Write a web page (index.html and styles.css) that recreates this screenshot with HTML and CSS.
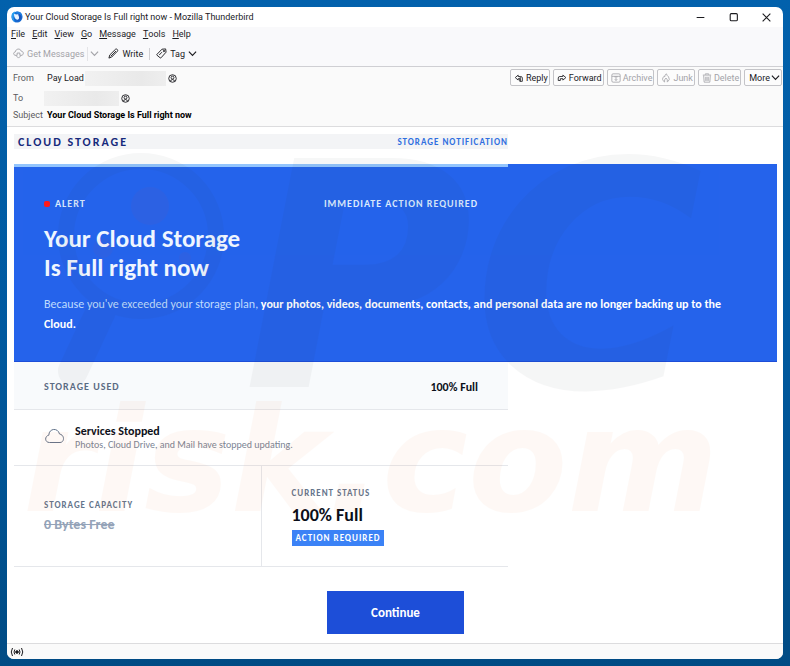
FILE: index.html
```html
<!DOCTYPE html>
<html lang="en">
<head>
<meta charset="utf-8">
<meta name="viewport" content="width=device-width, initial-scale=1">
<title>Your Cloud Storage Is Full right now - Mozilla Thunderbird</title>
<link rel="stylesheet" href="styles.css">
</head>
<body>
<div class="window">
  <header class="titlebar">
    <svg class="logo" viewBox="0 0 24 24" aria-hidden="true"><circle cx="12" cy="12" r="11" fill="#1668d0"/><path d="M2 5C0 12 2 20 9 23C4 17 4 9 9 4L7 1Z" fill="#2a9df0"/><path d="M6 6L12 7C18 5 20 10 18 14C15 19 10 18 8 14C6 11 6 8 6 6Z" fill="#e8f4ff"/><path d="M14 7L18 5L21 9C22 15 17 20 12 20C17 17 17 12 14 7Z" fill="#1c55ba"/><path d="M12 1C19 0 24 6 22 14C21 8 18 5 12 5L8 3Z" fill="#1f7fe0"/></svg>
    <span class="title">Your Cloud Storage Is Full right now - Mozilla Thunderbird</span>
    <div class="controls">
      <button aria-label="Minimize"><svg viewBox="0 0 10 10"><path d="M1.500 5H8.500"/></svg></button>
      <button aria-label="Maximize"><svg viewBox="0 0 10 10"><rect x="2" y="1.500" width="6.500" height="6.500" rx="1"/></svg></button>
      <button aria-label="Close"><svg viewBox="0 0 10 10"><path d="M1.500 1.500L8.500 8.500M8.500 1.500L1.500 8.500"/></svg></button>
    </div>
  </header>
  <div class="chrome">
    <nav class="menu">
      <button><u>F</u>ile</button><button><u>E</u>dit</button><button><u>V</u>iew</button><button><u>G</u>o</button><button><u>M</u>essage</button><button><u>T</u>ools</button><button><u>H</u>elp</button>
    </nav>
    <div class="toolbar">
      <button class="off"><svg class="ic" viewBox="0 0 12 12"><path d="M3 8C0 8 0 4.500 2.500 4.300C3 0.500 8 0 9 3.500C12 3.500 12 8 9 8M4.500 5.500H7.500V8H9L6 11L3 8H4.500Z"/></svg>Get Messages</button>
      <button class="drop off" aria-label="Get messages options"><svg class="chev" viewBox="0 0 8 8"><path d="M0.800 2.300L4 5.700L7.200 2.300"/></svg></button>
      <button class="write"><svg class="ic" viewBox="0 0 12 12"><path d="M1 11L2 7.500L8.300 1.300Q9.300 0.700 10.200 1.700Q11 2.700 10.300 3.500L4 9.900Z"/><path d="M3 9L8.700 3.300"/></svg>Write</button>
      <button class="tag"><svg class="ic" viewBox="0 0 12 12"><path d="M1 7L6.500 1.300L10.500 1L11 4.500L5.500 10.700Q5 11 4.500 10.700L1 7.800Q0.700 7.400 1 7ZM3.500 7.700L6.500 4.500"/><circle cx="8.700" cy="3.300" r=".8"/></svg>Tag<svg class="chev" viewBox="0 0 8 8"><path d="M0.800 2.300L4 5.700L7.200 2.300"/></svg></button>
    </div>
  </div>
  <section class="headers">
    <dl class="fields">
      <dt>From</dt><dd>Pay Load<span class="redact"></span><svg class="person" viewBox="0 0 10 10"><circle cx="5" cy="5" r="4.200"/><path d="M3 8V7Q5 5.300 7 7V8"/><circle cx="5" cy="4" r="1.600"/></svg></dd>
      <dt>To</dt><dd class="to"><span class="redact short"></span><svg class="person" viewBox="0 0 10 10"><circle cx="5" cy="5" r="4.200"/><path d="M3 8V7Q5 5.300 7 7V8"/><circle cx="5" cy="4" r="1.600"/></svg></dd>
      <dt>Subject</dt><dd class="subject">Your Cloud Storage Is Full right now</dd>
    </dl>
    <div class="actions">
      <button><svg class="ic" viewBox="0 0 12 12"><path d="M5 2.500L1.500 5.500L5 8.500V6.800H7V10H10V6Q10 4.200 8 4.200H5ZM7.500 4.500V10"/></svg>Reply</button>
      <button><svg class="ic" viewBox="0 0 12 12"><path d="M7 2.500L10.700 5.500L7 8.500V6.800H4V9H1.500V6Q1.500 4.200 3.500 4.200H7Z"/></svg>Forward</button>
      <button class="off"><svg class="ic" viewBox="0 0 12 12"><rect x="1" y="1" width="10" height="10" rx="1.500"/><path d="M1 4H11M4 4.500H8M6 5V9M4.500 7.500L6 9L7.500 7.500"/></svg>Archive</button>
      <button class="off"><svg class="ic" viewBox="0 0 12 12"><path d="M6.500 1Q7 3 9 4.500Q11.500 8 8 10.500M6.500 1Q4 2.500 4.500 4.500L3.500 4Q0 8 4 10.500M4.300 11Q3.500 8 6 6Q8.500 8 7.500 11"/></svg>Junk</button>
      <button class="off"><svg class="ic" viewBox="0 0 12 12"><path d="M1 2.500H11M4 2V1H8V2M2 3L2.600 11H9.400L10 3M4.500 4.500V9.500M6 4.500V9.500M7.500 4.500V9.500"/></svg>Delete</button>
      <button class="more">More<svg class="chev" viewBox="0 0 8 8"><path d="M0.800 2.300L4 5.700L7.200 2.300"/></svg></button>
    </div>
  </section>
  <main class="mail">
    <div class="brand column"><span class="name">CLOUD STORAGE</span><span class="note">STORAGE NOTIFICATION</span></div>
    <section class="hero">
      <div class="rule column"></div>
      <div class="flags column"><span class="alert"><i class="dot"></i>ALERT</span><span>IMMEDIATE ACTION REQUIRED</span></div>
      <div class="pitch">
        <h1>Your Cloud Storage<br>Is Full right now</h1>
        <p>Because you've exceeded your storage plan, <strong>your photos, videos, documents, contacts, and personal data are no longer backing up to the Cloud.</strong></p>
      </div>
    </section>
    <div class="used column"><span class="label">STORAGE USED</span><b>100% Full</b></div>
    <div class="services column">
      <svg class="cloud" viewBox="0 0 20 16"><path d="M5 14.500C0 14.500 0 8 4.300 7.200C4.500 0 13.500-.5 15 6C20.500 7 20 14.500 15.500 14.500Z"/></svg>
      <div><h2>Services Stopped</h2><p>Photos, Cloud Drive, and Mail have stopped updating.</p></div>
    </div>
    <div class="stats column">
      <div class="stat"><span class="caption">STORAGE CAPACITY</span><s>0 Bytes Free</s></div>
      <div class="stat"><span class="caption">CURRENT STATUS</span><b class="big">100% Full</b><span class="badge">ACTION REQUIRED</span></div>
    </div>
    <a class="continue" href="#">Continue</a>
    <svg class="watermark" viewBox="0 0 776 516" aria-hidden="true">
      <g fill="none" stroke="#283037"><circle cx="134" cy="109" r="75" stroke-width="16"/><path d="M94 184L66 244" stroke-width="30" stroke-linecap="round"/></g>
      <g fill="#e04040"><circle cx="143" cy="79" r="19"/><circle cx="96" cy="121" r="10"/><circle cx="178" cy="131" r="6"/></g>
      <text class="wm-pc" x="236" y="260">PC</text>
      <text class="wm-risk" x="16" y="384">risk.com</text>
    </svg>
  </main>
  <footer class="status"><svg viewBox="0 0 14 10"><circle cx="7" cy="5" r="1.300" fill="currentColor"/><path d="M4.800 2.500Q3.200 5 4.800 7.500M9.200 2.500Q10.800 5 9.200 7.500M2.500 1Q0 5 2.500 9M11.500 1Q14 5 11.500 9"/></svg></footer>
</div>
</body>
</html>
```
FILE: styles.css
```css
* { box-sizing: border-box; }
body {
  margin: 0;
  min-height: 100vh;
  padding: 7px;
  display: flex;
  background: linear-gradient(#0261ac, #00599f 50%, #004b84);
  font: 9px/12px Roboto, "Open Sans", sans-serif;
  color: #1b1b1f;
}
button {
  font: inherit;
  color: inherit;
  background: none;
  border: 0;
  padding: 0;
  display: flex;
  align-items: center;
}
svg { fill: none; stroke: currentColor; flex: none; }
.window {
  flex: 1;
  display: flex;
  flex-direction: column;
  background: #fff;
  border-radius: 7px;
  overflow: hidden;
  margin-bottom: 1px;
}
.titlebar { height: 20px; display: flex; align-items: center; padding: 0 11px 0 4px; gap: 2px; }
.logo { width: 12px; height: 12px; stroke: none; }
.controls { margin-left: auto; display: flex; gap: 22px; }
.controls svg { width: 11px; height: 11px; }
.chrome { background: #f9f9fb; height: 40px; border-bottom: 1px solid #cfcfd3; }
.menu { display: flex; gap: 7px; padding: 1px 4px; }
.menu u { text-underline-offset: 1px; }
.toolbar { display: flex; align-items: center; height: 24px; padding: 1px 6px 0; }
.ic { width: 11px; height: 11px; margin-right: 3px; }
.chev { width: 9px; height: 9px; }
.off { color: #a3a3a8; }
.drop { border-left: 1px solid #e4e4e7; height: 14px; margin-left: 3px; padding-left: 2px; }
.write { margin-left: 9px; }
.tag { border-left: 1px solid #cfcfd3; margin-left: 6px; padding-left: 6px; }
.tag .chev { margin-left: 3px; }
.headers {
  display: flex;
  justify-content: space-between;
  background: #fafafa;
  border-bottom: 1px solid #dcdcde;
  height: 60px;
}
.fields { display: grid; grid-template-columns: 34px auto; grid-template-rows: 22px 18px 16px; align-items: center; margin: 0; padding-left: 6px; }
.fields dt { color: #5b5b60; }
.fields dd { margin: 0; display: flex; align-items: center; }
.fields .subject { font-weight: 700; color: #000; }
.redact { width: 81px; height: 15px; margin: 0 2px 0 1px; background: linear-gradient(90deg, #f1f1f1, #e9e9e9 70%, #eee); }
.short { width: 75px; margin-left: -3px; }
.person { width: 9px; height: 9px; }
.actions { display: flex; gap: 3px; padding: 2px 1px 0 0; }
.actions button { height: 17px; border: 1px solid #c4c4c8; border-radius: 2px; padding: 0 1px 0 3px; background: #fcfcfc; }
.actions .ic { width: 10px; height: 10px; margin-right: 2px; }
.actions .more { padding-left: 4px; }
.more .chev { margin-left: 1px; }

.mail {
  position: relative;
  flex: 1;
  padding: 7px 6px 0 7px;
  display: flex;
  flex-direction: column;
  font-family: Carlito, Lato, sans-serif;
  color: #0b0f19;
}
.column { width: 100%; max-width: 494px; display: flex; justify-content: space-between; }
.brand { background: #f3f4f6; height: 15px; align-items: center; padding-left: 4px; margin-bottom: 15px; }
.name { font-size: 12px; font-weight: 700; letter-spacing: 2px; color: #172a7c; }
.note { font-weight: 700; letter-spacing: 1px; color: #2f6fe0; }
.hero { background: #2563eb; color: #fff; height: 198px; border-bottom: 1px solid #1d4ed8; }
.rule { height: 3px; background: #93c5fd; }
.flags { padding: 31px 30px 0; font-size: 10px; font-weight: 700; letter-spacing: 1px; color: #dbeafe; }
.alert { display: flex; align-items: center; gap: 5px; }
.dot { width: 6px; height: 6px; border-radius: 2px; background: #ff1a1a; }
.pitch { padding: 14px 30px 0; }
h1 { margin: 0; font-size: 25px; line-height: 29px; font-weight: 700; color: #eff6ff; }
.pitch p { margin: 12px 0 0; font-size: 12px; line-height: 20px; color: #bfdbfe; }
.pitch strong { color: #fff; }
.used { height: 48px; padding: 2px 30px 0; align-items: center; background: #f8fafc; border-bottom: 1px solid #e5e7eb; }
.used b { font-size: 12px; }
.label { font-size: 10px; font-weight: 700; letter-spacing: 1px; color: #5b6b83; }
.services { height: 56px; padding: 0 30px; align-items: center; justify-content: flex-start; gap: 10px; border-bottom: 1px solid #e5e7eb; }
.cloud { width: 21px; height: 16px; color: #64748b; margin-bottom: 4px; }
h2 { margin: 0; font-size: 12px; line-height: 14px; }
.services p { margin: 0; font-size: 10px; line-height: 14px; color: #7b8494; }
.stats { height: 101px; border-bottom: 1px solid #e5e7eb; }
.stat { flex: 1; padding: 0 30px; display: flex; flex-direction: column; justify-content: center; align-items: flex-start; }
.stat + .stat { border-left: 1px solid #e5e7eb; }
.caption { font-weight: 700; letter-spacing: 1px; color: #64748b; }
.stat s { margin-top: 5px; font-size: 14px; line-height: 18px; font-weight: 700; color: #94a3b8; }
.big { font-size: 18px; line-height: 24px; margin: 4px 0 3px; }
.badge { background: #3b82f6; color: #fff; font-weight: 700; letter-spacing: 1px; padding: 2px 4px; }
.continue {
  align-self: center;
  margin: 24px 0 9px;
  padding: 14px 44px;
  background: #1d4ed8;
  color: #fff;
  font-size: 13px;
  line-height: 15px;
  font-weight: 700;
  text-decoration: none;
}
.watermark { position: absolute; top: 0; left: 0; width: 100%; pointer-events: none; stroke: none; opacity: .04; overflow: visible; }
.wm-pc { font: italic 700 314px "DejaVu Sans", sans-serif; fill: #283037; }
.wm-risk { font: italic 700 145px "DejaVu Sans", sans-serif; fill: #f26a1b; }
.status { height: 16px; border-top: 1px solid #dcdcde; background: #fafafa; padding-left: 3px; display: flex; align-items: center; }
.status svg { width: 14px; height: 10px; }
```
